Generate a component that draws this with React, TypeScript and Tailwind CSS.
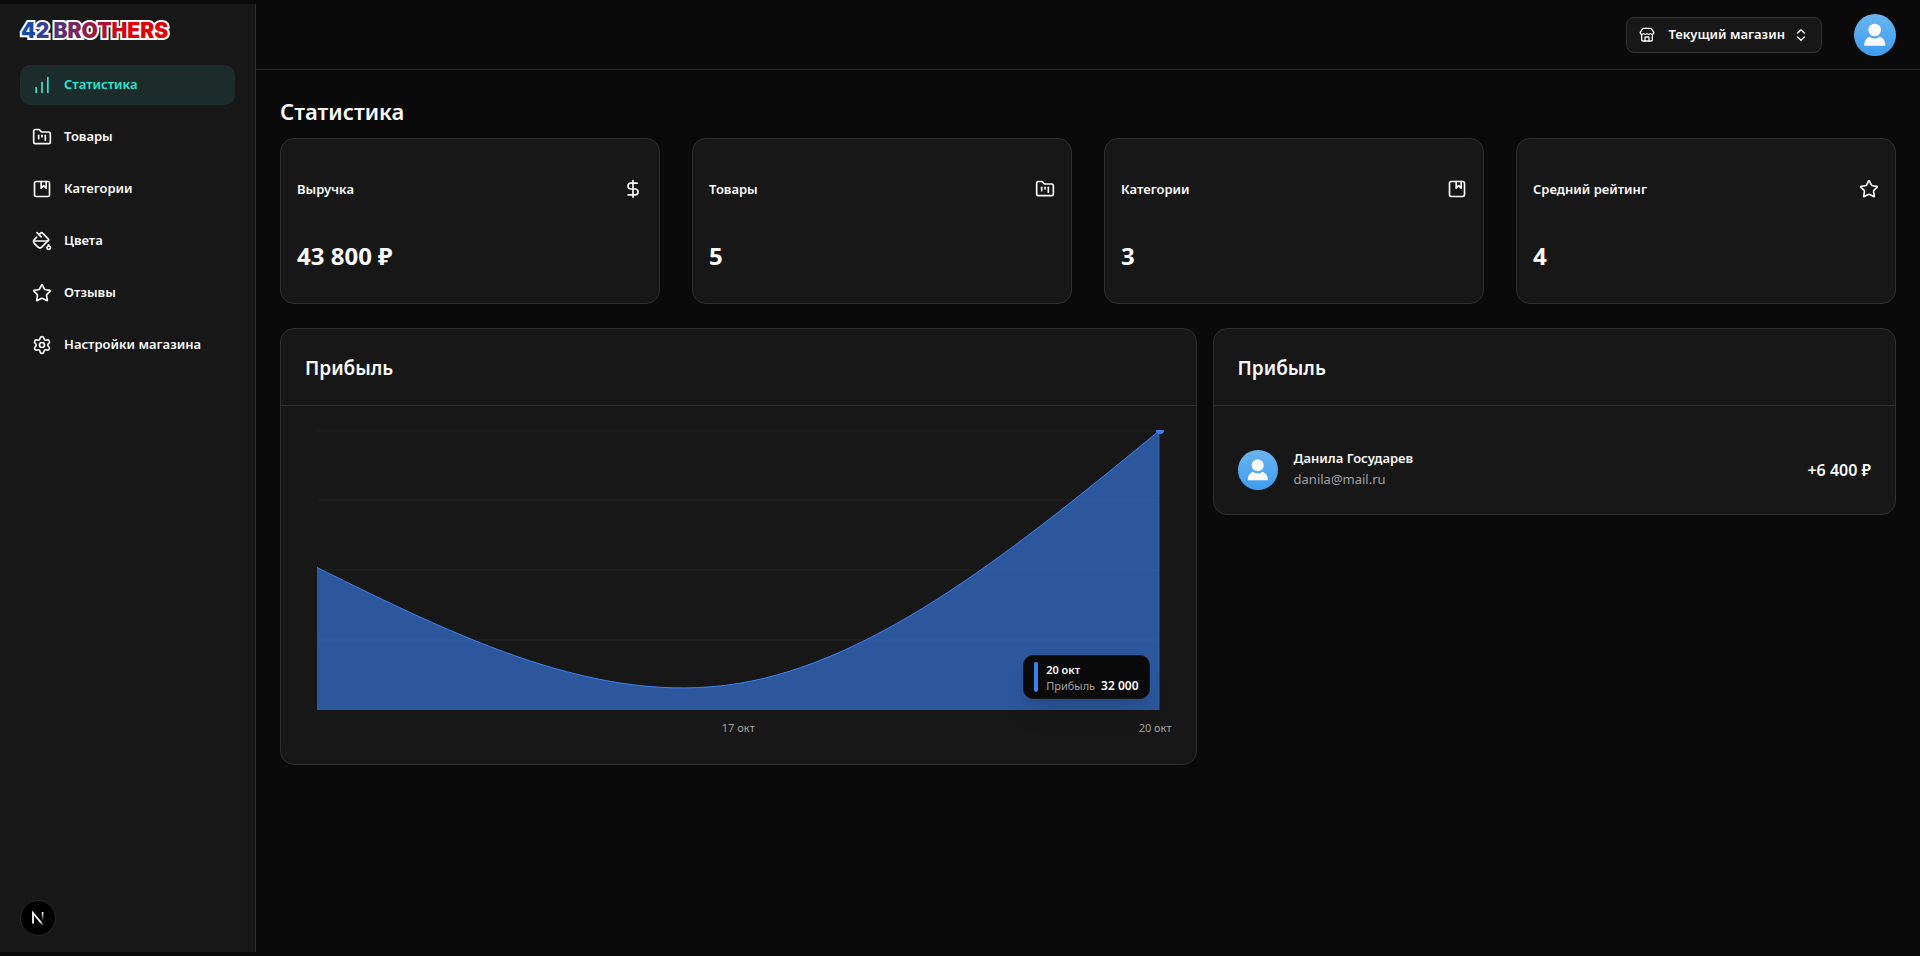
import type { ReactNode } from 'react'
import {
  Album,
  ChartNoAxesColumnIncreasing,
  ChevronsUpDown,
  DollarSign,
  FolderKanban,
  PaintBucket,
  Settings,
  Star,
  Store,
  type LucideIcon,
} from 'lucide-react'

const navItems: { label: string; icon: LucideIcon; active?: boolean }[] = [
  { label: 'Статистика', icon: ChartNoAxesColumnIncreasing, active: true },
  { label: 'Товары', icon: FolderKanban },
  { label: 'Категории', icon: Album },
  { label: 'Цвета', icon: PaintBucket },
  { label: 'Отзывы', icon: Star },
  { label: 'Настройки магазина', icon: Settings },
]

const stats: { label: string; value: string; icon: LucideIcon }[] = [
  { label: 'Выручка', value: '43 800 ₽', icon: DollarSign },
  { label: 'Товары', value: '5', icon: FolderKanban },
  { label: 'Категории', value: '3', icon: Album },
  { label: 'Средний рейтинг', value: '4', icon: Star },
]

function Logo() {
  return (
    <svg className="h-7 w-40 overflow-visible" viewBox="0 0 160 28" role="img" aria-label="42 BROTHERS">
      <defs>
        <linearGradient id="logo-fill" gradientUnits="userSpaceOnUse" x1="0" y1="0" x2="110" y2="0">
          <stop offset="0" stopColor="#0a50b4" />
          <stop offset="1" stopColor="#e00008" />
        </linearGradient>
      </defs>
      <text
        x="1"
        y="22"
        fill="url(#logo-fill)"
        stroke="#ffffff"
        strokeWidth="4"
        strokeLinejoin="miter"
        paintOrder="stroke"
        className="font-['Inter',sans-serif] text-[21px] font-black"
      >
        42 BROTHERS
      </text>
    </svg>
  )
}

function Avatar({ className }: { className: string }) {
  return (
    <svg className={className} viewBox="0 0 42 42" role="img" aria-label="Аватар">
      <defs>
        <linearGradient id="avatar-fill" x1="0" y1="0" x2="0" y2="1">
          <stop offset="0" stopColor="#6ab4ef" />
          <stop offset="1" stopColor="#3d9df0" />
        </linearGradient>
      </defs>
      <circle cx="21" cy="21" r="21" fill="url(#avatar-fill)" />
      <circle cx="20.7" cy="16" r="6.3" fill="#fafafa" />
      <path
        d="M10.200 31.700c0-4.800 2-7.800 5.600-8.900 1.400 1.200 3 1.800 4.900 1.800s3.600-.6 4.900-1.800c3.700 1.100 5.800 4.100 5.800 8.900Z"
        fill="#fafafa"
      />
    </svg>
  )
}

function Sidebar() {
  return (
    <aside className="my-1 flex w-64 shrink-0 flex-col border-r border-[#2e2e2e] bg-[#171717] px-5 pt-3">
      <a href="#" className="flex">
        <Logo />
      </a>
      <nav className="mt-[21px] flex flex-col gap-3">
        {navItems.map(({ label, icon: Icon, active }) => (
          <a
            key={label}
            href="#"
            className={
              active
                ? 'flex h-10 items-center gap-3 rounded-[10px] bg-[#1b2c2b] px-3 text-[13px] font-semibold text-[#2ee6d6]'
                : 'flex h-10 items-center gap-3 rounded-[10px] px-3 text-[13px] font-semibold text-[#fafafa]'
            }
          >
            <Icon className="size-5" />
            {label}
          </a>
        ))}
      </nav>
      <button
        type="button"
        aria-label="Next.js"
        className="mt-auto mb-4 flex size-9 items-center justify-center rounded-full border border-[#2a2a2a] bg-black"
      >
        <svg className="size-4" viewBox="0 0 16 16" fill="none">
          <defs>
            <linearGradient id="n-diagonal" gradientUnits="userSpaceOnUse" x1="3" y1="2" x2="14" y2="15">
              <stop offset="0.7" stopColor="#ffffff" />
              <stop offset="1" stopColor="#ffffff" stopOpacity="0" />
            </linearGradient>
            <linearGradient id="n-stem" gradientUnits="userSpaceOnUse" x1="0" y1="2" x2="0" y2="11">
              <stop offset="0" stopColor="#ffffff" />
              <stop offset="1" stopColor="#ffffff" stopOpacity="0" />
            </linearGradient>
          </defs>
          <path d="M3 13.500V3L13.500 15.500" stroke="url(#n-diagonal)" strokeWidth="1.800" />
          <path d="M12.600 2v8.500" stroke="url(#n-stem)" strokeWidth="1.800" />
        </svg>
      </button>
    </aside>
  )
}

function Header() {
  return (
    <header className="flex h-[70px] items-center justify-end gap-8 border-b border-[#262626] px-6">
      <button
        type="button"
        className="flex h-9 w-[196px] items-center gap-2 rounded-lg border border-[#333333] bg-[#171717] px-3 text-[13px] font-semibold text-[#fafafa]"
      >
        <Store className="size-4" />
        <span className="flex-1 text-right">Текущий магазин</span>
        <ChevronsUpDown className="size-4" />
      </button>
      <button type="button" aria-label="Профиль" className="rounded-full">
        <Avatar className="size-[42px]" />
      </button>
    </header>
  )
}

function Panel({ title, children }: { title: string; children: ReactNode }) {
  return (
    <>
      <h2 className="border-b border-[#2e2e2e] pt-[25px] pb-[23px] pl-6 text-[19px] leading-7 font-semibold">{title}</h2>
      <div className="p-6">{children}</div>
    </>
  )
}

const curve = 'M0 137.5C140.5 206.900 281 276.300 421.500 253.500C562 230.700 702.500 115.500 843 0.500'

function ProfitChart() {
  return (
    <figure className="relative px-3">
      <svg className="block h-[280px] w-full" viewBox="0 0 843 280" preserveAspectRatio="none">
        <g stroke="#1d1d1d">
          <path d="M0 .5H843" />
          <path d="M0 70H843M0 140H843M0 210H843" strokeWidth="2" />
        </g>
        <path d={`${curve}V280H0Z`} fill="#3b82f6" fillOpacity="0.6" />
        <path d={curve} fill="none" stroke="#3b82f6" vectorEffect="non-scaling-stroke" />
      </svg>
      <svg className="absolute top-0 right-2 h-1 w-2" viewBox="0 0 8 4">
        <path d="M0 0H8A4 4 0 0 1 0 0Z" fill="#3b82f6" />
      </svg>
      <figcaption className="grid grid-cols-[1fr_auto_1fr] pt-2.5 pb-1 text-[11px] leading-4 text-[#a1a1a1]">
        <span />
        <span>17 окт</span>
        <span className="-mr-3 text-right">20 окт</span>
      </figcaption>
      <div className="absolute right-[22px] bottom-[41px] flex h-11 gap-2 rounded-[10px] border border-[#171717] bg-[#0a0a0a] px-2.5 py-1.5 text-[11px] shadow-xl">
        <div className="w-1 rounded-sm bg-[#3b82f6]" />
        <div className="flex flex-col leading-4">
          <p className="font-semibold">20 окт</p>
          <p className="flex items-baseline gap-1.5">
            <span className="text-[#a1a1a1]">Прибыль</span>
            <span className="text-xs leading-4 font-semibold">32 000</span>
          </p>
        </div>
      </div>
    </figure>
  )
}

export default function App() {
  return (
    <div className="flex min-h-screen bg-[#0a0a0a] font-['Noto_Sans',sans-serif] text-[#fafafa]">
      <Sidebar />
      <div className="flex min-w-0 flex-1 flex-col">
        <Header />
        <main className="px-6 pt-[23px]">
          <h1 className="text-[22px] leading-9 font-semibold">Статистика</h1>
          <section className="mt-[9px] grid grid-cols-4 gap-8">
            {stats.map(({ label, value, icon: Icon }) => (
              <article key={label} className="rounded-[14px] border border-[#2e2e2e] bg-[#171717] px-4 pt-10 pb-[31px]">
                <div className="flex items-center justify-between">
                  <h3 className="text-[13px] leading-5 font-semibold">{label}</h3>
                  <Icon className="size-5" />
                </div>
                <p className="mt-[41px] text-2xl leading-8 font-bold">{value}</p>
              </article>
            ))}
          </section>
          <section className="mt-6 grid grid-cols-7 items-start gap-4">
            <article className="col-span-4 rounded-[14px] border border-[#2e2e2e] bg-[#171717]">
              <Panel title="Прибыль">
                <ProfitChart />
              </Panel>
            </article>
            <article className="col-span-3 rounded-[14px] border border-[#2e2e2e] bg-[#171717]">
              <Panel title="Прибыль">
                <div className="flex items-center gap-4 pt-5">
                  <Avatar className="size-10" />
                  <div className="flex h-10 flex-1 flex-col gap-1">
                    <p className="text-[13px] leading-4 font-semibold">Данила Государев</p>
                    <p className="text-[13px] leading-[18px] text-[#a1a1a1]">danila@mail.ru</p>
                  </div>
                  <p className="font-semibold">+6 400 ₽</p>
                </div>
              </Panel>
            </article>
          </section>
        </main>
      </div>
    </div>
  )
}
